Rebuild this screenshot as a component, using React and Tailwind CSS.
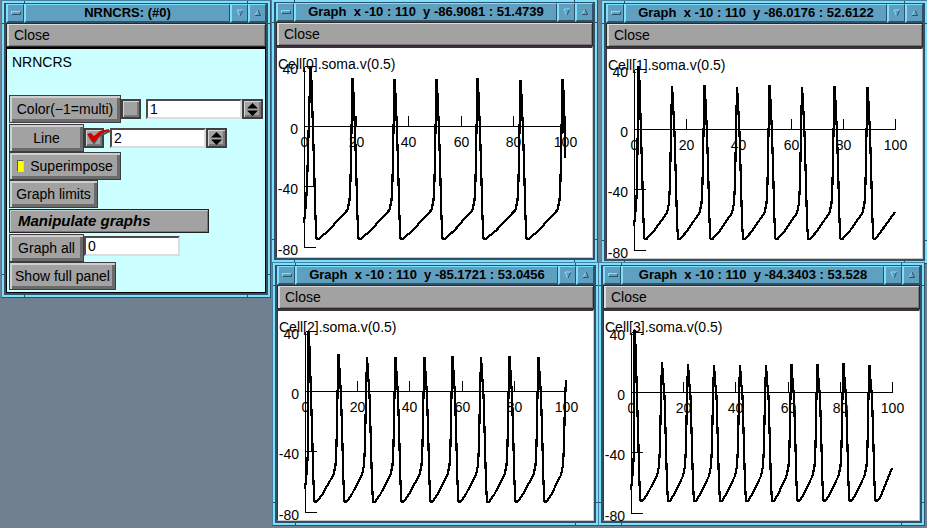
import React from "react";

const bevel =
  "border border-[#3f3c40] shadow-[inset_2px_2px_0_#cfcfcf,inset_-3px_-3px_0_#6b6b6b] bg-[#a2a2a2]";
const smallBevel =
  "border-2 border-[#3f3f3f] shadow-[inset_1px_1px_0_#d4d4d4,inset_-2px_-2px_0_#777777] bg-[#a2a2a2]";
const titleBevel =
  "bg-[#5f9fbf] border-t border-l-2 border-t-[#7fdfff] border-l-[#7fdfff] border-r border-b-2 border-r-[#2f5266] border-b-[#2f5266]";

// Notches that divide the frame into corner and edge handles.
function FrameNotches() {
  return (
    <>
      <i className="absolute left-[22px] top-0 h-[3px] w-px bg-[#2f5266]" />
      <i className="absolute right-[22px] top-0 h-[3px] w-px bg-[#2f5266]" />
      <i className="absolute bottom-0 left-[22px] h-[3px] w-px bg-[#2f5266]" />
      <i className="absolute bottom-0 right-[22px] h-[3px] w-px bg-[#2f5266]" />
      <i className="absolute left-0 top-[22px] h-px w-[3px] bg-[#2f5266]" />
      <i className="absolute right-0 top-[22px] h-px w-[3px] bg-[#2f5266]" />
      <i className="absolute bottom-[22px] left-0 h-px w-[3px] bg-[#2f5266]" />
      <i className="absolute bottom-[22px] right-0 h-px w-[3px] bg-[#2f5266]" />
    </>
  );
}

function Window({ title, place, children }) {
  return (
    <section
      aria-label={title}
      className={`absolute border border-[#46809a] border-b-[#2f5266] border-r-[#2f5266] bg-[#7fdfff] p-[2px] ${place}`}
    >
      <FrameNotches />
      <div className="flex h-full flex-col border border-b-2 border-l-2 border-r-2 border-[#2f5266]">
        <header className="flex h-[19px] shrink-0">
          <button aria-label="Window menu" className={`flex w-[18px] items-center justify-center ${titleBevel}`}>
            <span className="h-1 w-[10px] border border-b-[#2f5266] border-l-[#7fdfff] border-r-[#2f5266] border-t-[#7fdfff]" />
          </button>
          <h1
            className={`flex flex-1 items-center justify-center whitespace-pre text-[13px] font-bold leading-4 text-black ${titleBevel}`}
          >
            {title}
          </h1>
          <button aria-label="Minimize" className={`flex w-[18px] items-center justify-center ${titleBevel}`}>
            <svg width="8" height="8" viewBox="0 0 8 8" fill="none">
              <path d="M3.5 7 L1 1 H7" stroke="#7fdfff" />
              <path d="M6.5 1.5 L4 7" stroke="#2f5266" />
            </svg>
          </button>
          <button aria-label="Maximize" className={`flex w-[18px] items-center justify-center ${titleBevel}`}>
            <svg width="8" height="8" viewBox="0 0 8 8" fill="none">
              <path d="M1 6.5 L4 1" stroke="#7fdfff" />
              <path d="M4 1 L6.5 6.5 H1" stroke="#2f5266" />
            </svg>
          </button>
        </header>
        <nav className="flex h-6 shrink-0 border border-[#2a2a2a] bg-[#a2a2a2] shadow-[inset_2px_1px_0_#dcdcdc,inset_-1px_-1px_0_#777777]">
          <button className="px-[7px] text-[14px] leading-5">Close</button>
        </nav>
        {children}
      </div>
    </section>
  );
}

const UNIT = 60.25;
const LEFT = 27.5;

function tracePath({ start, spikes, end, zero, trough }) {
  const y = (v) => zero + v;
  const pts = [[27, start], [28, start - 9], [29, y(76)], [30, y(60)]];
  spikes.forEach(([px, py], i) => {
    if (i > 0) pts.push([px - 1, y(4)]);
    pts.push([px, py]);
    const last = i === spikes.length - 1;
    if (last && end.kind === "fall") {
      pts.push([px + 1, py + 12], [px + 2, y(0)], [end.x, end.y]);
      return;
    }
    pts.push([px + 1, py + 16], [px + 2.5, y(4)], [px + 4, y(55)], [px + 5, y(92)], [px + 6, y(trough)], [px + 8, y(trough)]);
    if (last && end.kind === "slope") {
      pts.push([px + 11, y(trough - 4)], [end.x, end.y]);
      return;
    }
    const nx = last ? end.x : spikes[i + 1][0];
    const from = px + 8;
    const run = nx - 5 - from;
    [[0.36, 0.3], [0.65, 0.63], [0.82, 0.81], [1, 1]].forEach(([t, f]) =>
      pts.push([from + run * t, y(trough - (trough - 84) * f)])
    );
    pts.push([nx - 3, y(74)], [nx - 2, y(54)]);
    if (last) pts.push([nx - 1, y(8)], [end.x, end.y]);
  });
  return pts.map((p) => p.join(",")).join(" ");
}

function Plot({ label, data }) {
  const axis = data.zero + 0.5;
  const xs = [0, 20, 40, 60, 80, 100];
  const ys = [40, 0, -40, -80];
  const tx = (v) => Math.floor(LEFT + v * 2.61) + 0.5;
  const ty = (v) => Math.round(data.zero - (v / 40) * UNIT) + 0.5;
  return (
    <div className="min-h-0 flex-1 border border-b-[#c8c8c8] border-l-[#3f3040] border-r-[#c8c8c8] border-t-2 border-t-[#3f3040] bg-white">
      <svg className="block h-full w-full overflow-visible text-[14px]" role="img" aria-label={label}>
        <g stroke="#000" strokeWidth="1" shapeRendering="crispEdges">
          <line x1={tx(0)} x2={tx(100)} y1={axis} y2={axis} />
          <line x1={tx(0)} x2={tx(0)} y1={ty(40)} y2={ty(-80)} />
          {xs.map((v) => (
            <line key={v} x1={tx(v)} x2={tx(v)} y1={axis - 11} y2={axis} />
          ))}
          {ys.map((v) => (
            <line key={v} x1={tx(0)} x2={tx(0) + 11} y1={ty(v)} y2={ty(v)} />
          ))}
        </g>
        <polyline
          points={tracePath(data)}
          fill="none"
          stroke="#000"
          strokeWidth="2.2"
          strokeLinejoin="bevel"
          shapeRendering="crispEdges"
        />
        <g fill="#000">
          {xs.map((v) => (
            <text key={v} x={tx(v)} y={data.zero + 21} textAnchor="middle">
              {v}
            </text>
          ))}
          {ys.map((v) => (
            <text key={v} x="21" y={Math.floor(ty(v)) + 8} textAnchor="end">
              {v}
            </text>
          ))}
          <text x="1" y="21">
            {label}
          </text>
        </g>
      </svg>
    </div>
  );
}

const graphs = [
  {
    title: "Graph  x -10 : 110  y -86.9081 : 51.4739",
    place: "left-[271px] -top-px w-[327px] h-[264px]",
    label: "Cell[0].soma.v(0.5)",
    data: {
      zero: 78,
      trough: 113,
      start: 175,
      spikes: [[33.5, 18], [75.5, 30], [117.5, 31], [159.5, 31], [200.5, 30], [243.5, 32], [285.5, 31]],
      end: { kind: "fall", x: 288, y: 110 },
    },
  },
  {
    title: "Graph  x -10 : 110  y -86.0176 : 52.6122",
    place: "left-[601px] top-0 w-[327px] h-[264px]",
    label: "Cell[1].soma.v(0.5)",
    data: {
      zero: 80,
      trough: 110,
      start: 177,
      spikes: [[31.5, 17], [65, 37], [97.5, 36], [130, 38], [162.5, 36], [195, 38], [227.5, 37], [260.5, 38]],
      end: { kind: "slope", x: 288, y: 163 },
    },
  },
  {
    title: "Graph  x -10 : 110  y -85.1721 : 53.0456",
    place: "left-[272px] top-[262px] w-[327px] h-[264px]",
    label: "Cell[2].soma.v(0.5)",
    data: {
      zero: 80,
      trough: 111,
      start: 178,
      spikes: [[30.5, 21], [60.5, 43], [89, 46], [117.5, 46], [146.5, 46], [174.5, 45], [203, 46], [231.5, 45], [260.5, 46]],
      end: { kind: "rise", x: 288, y: 69 },
    },
  },
  {
    title: "Graph  x -10 : 110  y -84.3403 : 53.528",
    place: "left-[598px] top-[262px] w-[327px] h-[264px]",
    label: "Cell[3].soma.v(0.5)",
    data: {
      zero: 81,
      trough: 109,
      start: 179,
      spikes: [[30.5, 19], [58, 51], [84, 53], [110, 54], [136, 54], [162, 54], [187.5, 53], [213.5, 53], [239.5, 52], [265.5, 54]],
      end: { kind: "slope", x: 288, y: 157 },
    },
  },
];

function PanelButton({ className = "", children }) {
  return <button className={`flex h-7 items-center justify-center px-1 leading-5 ${bevel} ${className}`}>{children}</button>;
}

function Field({ label, value, className = "" }) {
  return (
    <input
      aria-label={label}
      defaultValue={value}
      className={`h-5 w-24 border-2 border-b-[#dcdcdc] border-l-[#4a4a4a] border-r-[#dcdcdc] border-t-[#4a4a4a] bg-white px-[2px] leading-4 text-black outline-none ${className}`}
    />
  );
}

function Stepper({ label }) {
  return (
    <button aria-label={label} className={`flex h-5 w-[21px] items-center justify-center ${smallBevel}`}>
      <svg width="11" height="13" viewBox="0 0 11 13">
        <path d="M5.5 0 L11 5.5 H0 Z M0 7.5 H11 L5.5 13 Z" fill="#000" />
      </svg>
    </button>
  );
}

function Tick({ label, checked }) {
  return (
    <label className="relative block h-5 w-5">
      <input type="checkbox" aria-label={label} defaultChecked={checked} className={`block h-5 w-5 appearance-none ${smallBevel}`} />
      {checked && (
        <svg className="absolute -top-px left-0 overflow-visible" width="26" height="20" viewBox="0 0 26 20">
          <path d="M5 9 L10 16 L15 9 L26 4" fill="none" stroke="#555" strokeWidth="2" />
          <path d="M3 7 L7 6 L10 9 L16 4 L25 2 L25 4 L18 6 L10 15 L8 14 Z" fill="#d00000" />
        </svg>
      )}
    </label>
  );
}

function ControlPanel() {
  return (
    <div className="min-h-0 flex-1 border border-t-2 border-black bg-[#ccffff] pl-[2px] pt-[3px] text-[14px]">
      <p className="px-[3px] leading-5">NRNCRS</p>
      <div className="mt-[23px] flex flex-col items-start">
        <div className="mb-px flex h-7 items-center">
          <PanelButton className="w-28">Color(−1=multi)</PanelButton>
          <Tick label="Color" />
          <Field label="Color value" value="1" className="ml-[5px]" />
          <Stepper label="Step color" />
        </div>
        <div className="flex h-7 items-center">
          <PanelButton className="w-[75px]">Line</PanelButton>
          <Tick label="Line" checked />
          <Field label="Line value" value="2" className="ml-[6px]" />
          <Stepper label="Step line" />
        </div>
        <PanelButton className="w-28 gap-[6px]">
          <span className="h-3 w-[7px] border border-b-[#d4d4d4] border-l-[#555] border-r-[#d4d4d4] border-t-[#555] bg-[#ffff00]" />
          Superimpose
        </PanelButton>
        <PanelButton className="w-[89px]">Graph limits</PanelButton>
        <h2 className="my-px flex h-6 w-[200px] items-center border border-[#222] bg-[#a2a2a2] px-2 text-[15px] font-bold italic leading-5 shadow-[inset_1px_1px_0_#c8c8c8,inset_-1px_-1px_0_#777777]">
          Manipulate graphs
        </h2>
        <div className="flex h-7 items-start">
          <PanelButton className="w-[75px]">Graph all</PanelButton>
          <Field label="Graph all" value="0" className="mt-[2px]" />
        </div>
        <PanelButton className="w-[107px]">Show full panel</PanelButton>
      </div>
    </div>
  );
}

export default function App() {
  return (
    <main className="relative min-h-screen w-full overflow-hidden bg-[#708090] font-['Liberation_Sans',Arial,sans-serif] text-black">
      <Window title="NRNCRS: (#0)" place="left-px top-0 w-[270px] h-[298px]">
        <ControlPanel />
      </Window>
      {graphs.map((g) => (
        <Window key={g.label} title={g.title} place={g.place}>
          <Plot label={g.label} data={g.data} />
        </Window>
      ))}
    </main>
  );
}
